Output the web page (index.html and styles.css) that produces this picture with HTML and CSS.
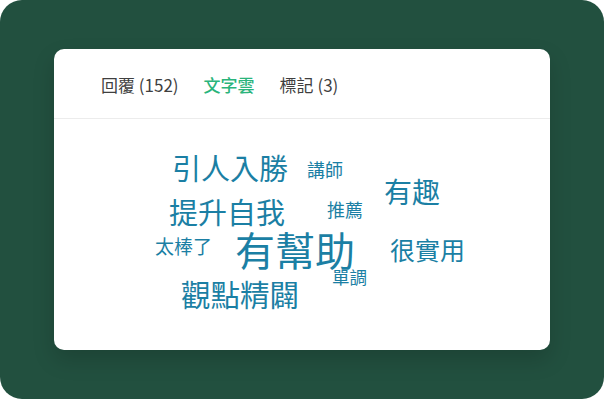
FILE: index.html
```html
<!DOCTYPE html>
<html lang="zh-Hant">
<head>
<meta charset="utf-8">
<title>文字雲</title>
<link rel="stylesheet" href="styles.css">
</head>
<body>
<div class="frame">
  <div class="card">
    <nav class="tabs">
      <span class="tab">回覆 (152)</span>
      <span class="tab active">文字雲</span>
      <span class="tab">標記 (3)</span>
    </nav>
    <div class="cloud">
      <span class="word w1">引人入勝</span>
      <span class="word w2">講師</span>
      <span class="word w3">有趣</span>
      <span class="word w4">提升自我</span>
      <span class="word w5">推薦</span>
      <span class="word w6">太棒了</span>
      <span class="word w7">有幫助</span>
      <span class="word w8">很實用</span>
      <span class="word w9">單調</span>
      <span class="word w10">觀點精闢</span>
    </div>
  </div>
</div>
</body>
</html>
```
FILE: styles.css
```css
html, body {
  margin: 0;
  padding: 0;
  background: #ffffff;
}
body {
  width: 604px;
  height: 400px;
  overflow: hidden;
  font-family: "Noto Sans CJK TC", "Noto Sans", sans-serif;
}
.frame {
  width: 604px;
  height: 399px;
  background: #22503f;
  border-radius: 22px;
  padding: 49px 54px 0 54px;
  box-sizing: border-box;
}
.card {
  width: 496px;
  height: 301px;
  background: #ffffff;
  border-radius: 10px;
  box-shadow: 0 10px 22px rgba(0, 0, 0, 0.16);
  overflow: hidden;
}
.tabs {
  height: 70px;
  box-sizing: border-box;
  border-bottom: 1px solid #ececec;
  display: flex;
  align-items: center;
  gap: 25px;
  padding-left: 47px;
  padding-top: 2px;
}
.tab {
  font-family: "Noto Sans CJK TC", "Noto Sans", sans-serif;
  font-size: 17px;
  color: #3f3f3f;
  line-height: 1;
}
.tab.active {
  color: #2ab47b;
  font-weight: 500;
}
.cloud {
  position: relative;
  height: 231px;
}
.word {
  position: absolute;
  font-family: "Noto Sans CJK TC", sans-serif;
  line-height: 0.9;
  color: #1b7fa4;
  white-space: nowrap;
}
.w1 { left: 118px; top: 34.5px; font-size: 29px; }
.w2 { left: 253px; top: 42px; font-size: 18px; }
.w3 { left: 330px; top: 59.5px; font-size: 28px; }
.w4 { left: 115px; top: 78.5px; font-size: 29px; }
.w5 { left: 273px; top: 82px; font-size: 18px; }
.w6 { left: 101px; top: 118px; font-size: 19px; }
.w7 { left: 181px; top: 112px; font-size: 40px; }
.w8 { left: 336px; top: 119px; font-size: 25px; }
.w9 { left: 278px; top: 150px; font-size: 17.5px; }
.w10 { left: 127px; top: 160.5px; font-size: 29.5px; }
```
